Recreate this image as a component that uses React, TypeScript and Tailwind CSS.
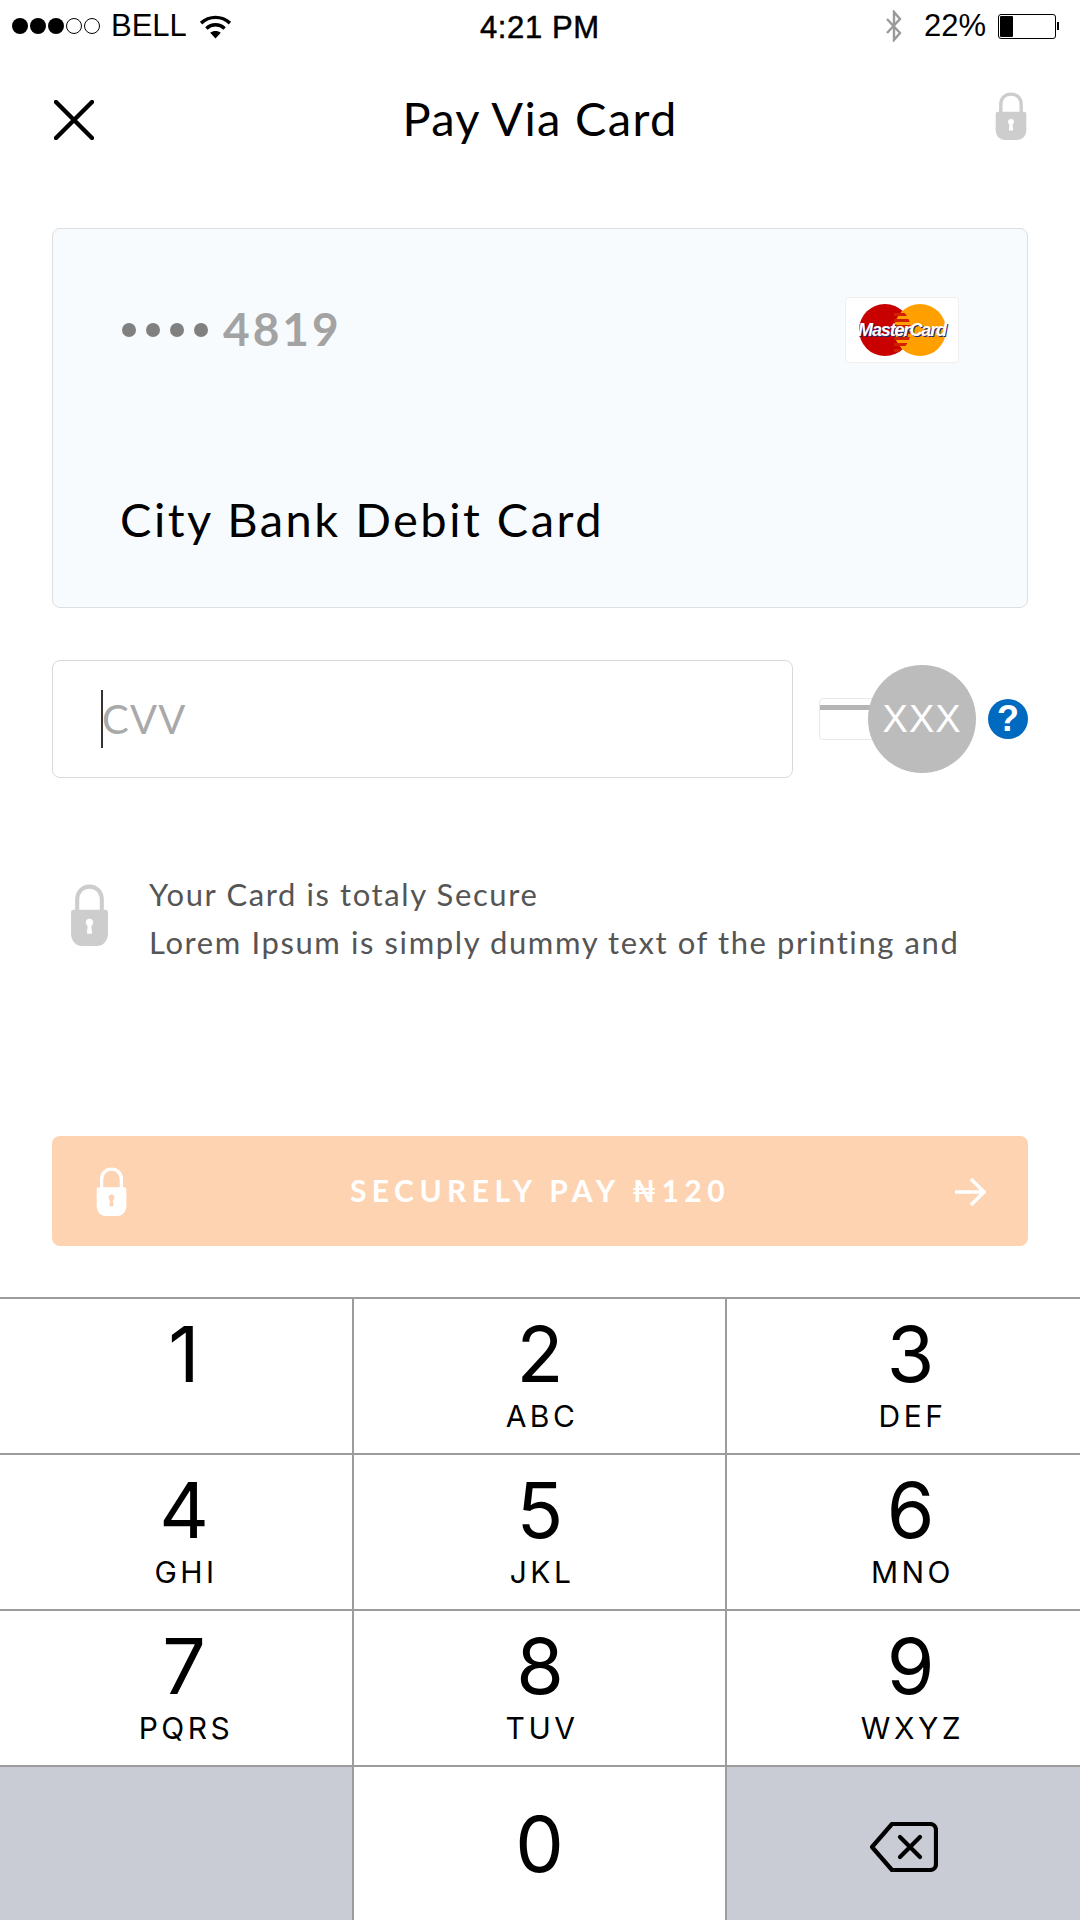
import React from "react";

const LATO = "font-['Lato','Noto_Sans',sans-serif]";
const HELV = "font-['Liberation_Sans','Arial',sans-serif]";
const KEYFONT = "font-['Inter','Liberation_Sans',sans-serif]";

function Lock({ fill, hole, className }: { fill: string; hole: string; className: string }) {
  return (
    <svg viewBox="0 0 40 58" preserveAspectRatio="none" className={className}>
      <path d="M8 28V15C8 7.500 13 2.500 20 2.500s12 5 12 12.500v13" fill="none" stroke={fill} strokeWidth="4" />
      <path d="M2 26.500C2 25 3 24 4.500 24h31C37 24 38 25 38 26.500V46c0 7-4.500 12-11 12H13C6.500 58 2 53 2 46Z" fill={fill} />
      <circle cx="20" cy="36" r="3.500" fill={hole} />
      <path d="M18.500 37h3l1 8.500c0 .8-.5 1-1 1h-3c-.5 0-1-.2-1-1Z" fill={hole} />
    </svg>
  );
}

function StatusBar() {
  return (
    <div className={`${HELV} relative flex h-[52px] items-center justify-between pl-[12px] pr-[21px] text-[31px] text-black`}>
      <div className="flex items-center">
        <div className="flex items-center gap-[2px]">
          {[0, 1, 2].map((i) => (
            <span key={i} className="h-[16px] w-[16px] rounded-full bg-black" />
          ))}
          {[0, 1].map((i) => (
            <span key={i} className="h-[16px] w-[16px] rounded-full border border-black" />
          ))}
        </div>
        <span className="ml-[11px]">BELL</span>
        <svg viewBox="0 0 34 26" className="ml-[12px] h-[25px] w-[33px]">
          <path d="M2 9.500C10.500 1.500 23.500 1.500 32 9.500" fill="none" stroke="#000" strokeWidth="3.600" />
          <path d="M7.500 15C13 10 21 10 26.500 15" fill="none" stroke="#000" strokeWidth="3.600" />
          <path d="M11.500 19.500c3-2.500 8-2.500 11 0L17 25.500Z" fill="#000" />
        </svg>
      </div>
      <span className="absolute left-[480px] top-[5px] text-[31px] tracking-[0.6px] [-webkit-text-stroke:0.5px_black]">4:21 PM</span>
      <div className="flex items-center">
        <svg viewBox="0 0 20 32" className="mr-[20px] h-[32px] w-[20px]">
          <path d="M3 9l13 14-6 7V2l6 7L3 23" fill="none" stroke="#9a9a9a" strokeWidth="2.400" />
        </svg>
        <span>22%</span>
        <div className="ml-[12px] flex items-center">
          <div className="flex h-[25px] w-[58px] items-center rounded-[3px] border border-black p-[1px]">
            <div className="h-full w-[13px] rounded-[1px] bg-black" />
          </div>
          <div className="ml-[1px] h-[8px] w-[2px] bg-black" />
        </div>
      </div>
    </div>
  );
}

function Header() {
  return (
    <div className="relative flex h-[136px] items-center justify-between pl-[54px] pr-[52px]">
      <svg viewBox="0 0 40 40" className="h-[40px] w-[40px]">
        <path d="M2 2l36 36M38 2L2 38" stroke="#000" strokeWidth="4.400" strokeLinecap="round" />
      </svg>
      <span className={`${LATO} relative left-[-4px] top-[-2px] text-[47px] leading-none tracking-[1.300px] text-black`}>Pay Via Card</span>
      <Lock fill="#cdcdcd" hole="#ffffff" className="relative top-[-4px] h-[48px] w-[34px]" />
    </div>
  );
}

function MasterCardLogo() {
  return (
    <div className="flex h-[66px] w-[114px] items-center justify-center rounded-[4px] border border-[#eeeeee] bg-white">
      <div className="relative flex h-[52px] w-[87px] items-center justify-center">
        <svg viewBox="0 0 87 52" className="absolute inset-0 h-full w-full">
          <defs>
            <clipPath id="mc-left">
              <circle cx="26" cy="26" r="26" />
            </clipPath>
          </defs>
          <circle cx="26" cy="26" r="26" fill="#c90000" />
          <circle cx="61" cy="26" r="26" fill="#ff9f00" />
          <g clipPath="url(#mc-left)">
            {[9, 15, 21, 27, 33, 39, 45].map((y) => (
              <rect key={y} x="35" y={y} width="18" height="3" fill="#d02000" />
            ))}
          </g>
        </svg>
        <span className={`${HELV} relative text-[18px] font-bold italic leading-none tracking-[-1.100px] text-white [text-shadow:1px_1px_0_#1b2a7a]`}>
          MasterCard
        </span>
      </div>
    </div>
  );
}

function CardPanel() {
  return (
    <div className="mx-[52px] mt-[40px] flex h-[380px] flex-col rounded-[8px] border border-[#dcdfe2] bg-[#f8fbfe] pl-[68px] pr-[68px]">
      <div className="mt-[68px] flex items-center justify-between">
        <div className="flex items-center">
          <div className="flex gap-[10px] pl-[1px]">
            {[0, 1, 2, 3].map((i) => (
              <span key={i} className="h-[14px] w-[14px] rounded-full bg-[#808080]" />
            ))}
          </div>
          <span className={`${LATO} relative top-[-1px] ml-[15px] text-[46px] font-bold leading-none tracking-[3px] text-[#a3a3a3]`}>4819</span>
        </div>
        <MasterCardLogo />
      </div>
      <div className={`${LATO} ml-[-1px] mt-[127px] text-[47px] leading-[58px] tracking-[2.500px] text-black`}>City Bank Debit Card</div>
    </div>
  );
}

function CvvRow() {
  return (
    <div className="mx-[52px] mt-[52px] flex h-[118px] items-center">
      <div className="flex h-full w-[742px] items-center rounded-[8px] border border-[#d9d9d9] pl-[48px]">
        <div className="h-[58px] w-[2px] bg-[#333333]" />
        <span className={`${LATO} ml-[-1px] text-[40px] leading-none tracking-[1.200px] text-[#a9a9a9]`}>CVV</span>
      </div>
      <div className="relative ml-[26px] h-[42px] w-[100px] rounded-[4px] border border-[#e8e8e8]">
        <div className="mt-[6px] h-[5px] w-full bg-[#b5b5b5]" />
      </div>
      <div className={`${HELV} z-10 ml-[-51px] flex h-[108px] w-[108px] items-center justify-center rounded-full bg-[#bcbcbc] text-[38px] tracking-[1px] text-white`}>
        XXX
      </div>
      <div className={`${HELV} ml-[12px] flex h-[40px] w-[40px] items-center justify-center rounded-full bg-[#0069c0] text-[36px] font-bold leading-none text-white`}>
        ?
      </div>
    </div>
  );
}

function Info() {
  return (
    <div className="mx-[52px] mt-[92px] flex">
      <Lock fill="#cdcdcd" hole="#ffffff" className="ml-[17px] mt-[14px] h-[62px] w-[41px]" />
      <div className={`${LATO} ml-[39px] text-[31px] leading-[48px] tracking-[1.600px] text-[#555555] whitespace-nowrap`}>
        <div>Your Card is totaly Secure</div>
        <div>Lorem Ipsum is simply dummy text of the printing and</div>
      </div>
    </div>
  );
}

function PayButton() {
  return (
    <div className="relative mx-[52px] mt-[170px] flex h-[110px] items-center justify-center rounded-[8px] bg-[#fdd3b2]">
      <Lock fill="#ffffff" hole="#fdd3b2" className="absolute left-[43px] top-[31px] h-[49px] w-[33px]" />
      <span className={`${LATO} relative top-[-1px] text-[30px] font-bold leading-none tracking-[5.450px] text-white`}>SECURELY PAY ₦120</span>
      <svg viewBox="0 0 32 30" className="absolute right-[42px] top-[41px] h-[30px] w-[32px]">
        <path d="M1 15h29M17 2l13 13-13 13" fill="none" stroke="#fff" strokeWidth="3.500" />
      </svg>
    </div>
  );
}

const COL_PAD = ["pl-[18px]", "pl-[3px]", "pl-[16px]"];

function Key({ digit, letters, col, last }: { digit: string; letters?: string; col: number; last?: boolean }) {
  return (
    <div className={`flex h-[156px] flex-col items-center border-t-2 border-[#9c9c9c] bg-white ${COL_PAD[col]} ${last ? "" : "border-r-2"}`}>
      <span className={`${KEYFONT} relative left-[-1px] mt-[12px] text-[77px] font-normal leading-[86px] text-black`}>{digit}</span>
      <span className={`${KEYFONT} relative left-[1px] mt-[1px] text-[30px] leading-[36px] tracking-[3.500px] text-black`}>{letters}</span>
    </div>
  );
}

function Keypad() {
  const keys: [string, string][] = [
    ["1", ""], ["2", "ABC"], ["3", "DEF"],
    ["4", "GHI"], ["5", "JKL"], ["6", "MNO"],
    ["7", "PQRS"], ["8", "TUV"], ["9", "WXYZ"],
  ];
  return (
    <div className="mt-[51px] grid grid-cols-[354px_373px_353px]">
      {keys.map(([d, l], i) => (
        <Key key={d} digit={d} letters={l} col={i % 3} last={i % 3 === 2} />
      ))}
      <div className="h-[156px] border-r-2 border-t-2 border-[#9c9c9c] bg-[#c9ccd4]" />
      <div className="flex h-[156px] items-center justify-center border-r-2 border-t-2 border-[#9c9c9c] bg-white">
        <span className={`${KEYFONT} text-[77px] font-normal leading-none text-black`}>0</span>
      </div>
      <div className="flex h-[156px] items-center justify-center border-t-2 border-[#9c9c9c] bg-[#c9ccd4]">
        <svg viewBox="0 0 68 50" className="mt-[5px] h-[50px] w-[68px]">
          <path d="M22 2h38c3.500 0 6 2.500 6 6v34c0 3.500-2.500 6-6 6H22L2 25Z" fill="none" stroke="#000" strokeWidth="4.200" strokeLinejoin="round" />
          <path d="M30 15l20 20M50 15L30 35" stroke="#000" strokeWidth="4.200" strokeLinecap="round" />
        </svg>
      </div>
    </div>
  );
}

export default function App() {
  return (
    <div className="h-[1920px] w-[1080px] overflow-hidden bg-white">
      <StatusBar />
      <Header />
      <CardPanel />
      <CvvRow />
      <Info />
      <PayButton />
      <Keypad />
    </div>
  );
}
